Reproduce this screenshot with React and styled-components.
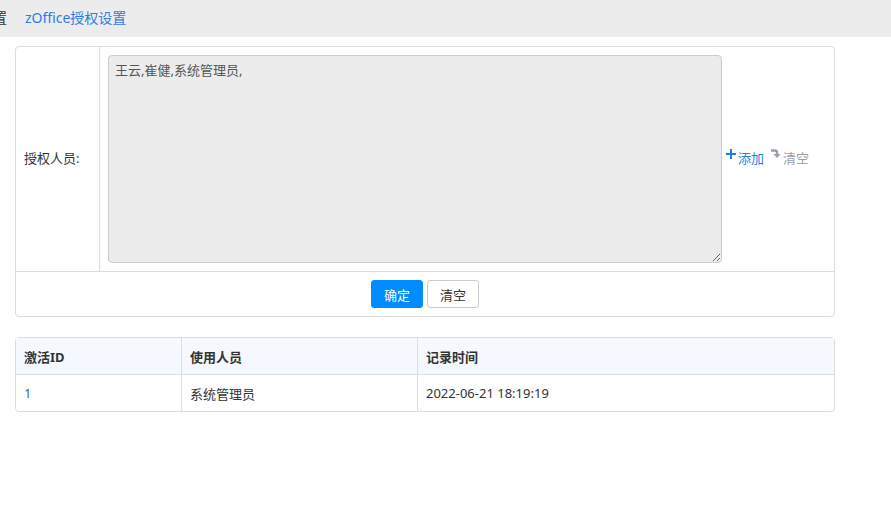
import React from "react";
import styled, { createGlobalStyle } from "styled-components";

const FONT = `"Noto Sans", "Noto Sans CJK SC", sans-serif`;

const Global = createGlobalStyle`
  html, body { margin: 0; padding: 0; background: #fff; }
  body {
    font-family: ${FONT};
    font-size: 13px;
    color: #333;
  }
`;

const TopBar = styled.div`
  height: 37px;
  box-sizing: border-box;
  padding-bottom: 3px;
  background: #ececec;
  display: flex;
  align-items: center;
  overflow: hidden;
  font-size: 14px;
  white-space: nowrap;
`;

const Crumb = styled.span`
  color: ${(p) => (p.$active ? "#2f7bea" : "#333")};
  margin-left: ${(p) => p.$ml || 0}px;
`;

const Page = styled.div`
  padding: 9px 56px 0 15px;
  width: 820px;
`;

const Panel = styled.div`
  border: 1px solid #ddd;
  border-radius: 4px;
  background: #fff;
`;

const FormRow = styled.div`
  display: flex;
  border-bottom: 1px solid #ddd;
`;

const LabelCell = styled.div`
  width: 75px;
  padding-left: 8px;
  padding-bottom: 4px;
  border-right: 1px solid #ddd;
  display: flex;
  align-items: center;
  color: #333;
`;

const FieldCell = styled.div`
  flex: 1;
  padding: 8px;
  display: flex;
  align-items: center;
`;

const Area = styled.textarea`
  width: 614px;
  height: 208px;
  box-sizing: border-box;
  background: #ececec;
  border: 1px solid #ccc;
  border-radius: 4px;
  padding: 4px 6px;
  font-family: ${FONT};
  font-size: 13px;
  color: #555;
  resize: both;
  margin: 0;
`;

const Links = styled.div`
  display: flex;
  align-items: center;
  margin-left: 4px;
  margin-bottom: 4px;
  gap: 7px;
  font-size: 13px;
`;

const ActLink = styled.span`
  display: inline-flex;
  align-items: center;
  color: ${(p) => p.$c};
  gap: 2px;
`;

const BtnRow = styled.div`
  display: flex;
  justify-content: center;
  gap: 4px;
  padding: 8px 0;
`;

const Btn = styled.button`
  width: 52px;
  height: 28px;
  border-radius: 3px;
  font-family: ${FONT};
  font-size: 13px;
  border: 1px solid ${(p) => (p.$primary ? "#008cff" : "#ccc")};
  background: ${(p) => (p.$primary ? "#008cff" : "#fff")};
  color: ${(p) => (p.$primary ? "#fff" : "#333")};
  padding: 0;
`;

const Table = styled.table`
  margin-top: 20px;
  width: 820px;
  border-collapse: separate;
  border-spacing: 0;
  border: 1px solid #ddd;
  border-radius: 4px;
  font-size: 13px;
`;

const Th = styled.th`
  text-align: left;
  font-weight: bold;
  background: #f5f9ff;
  height: 37px;
  padding: 0 8px;
  color: #333;
  border-bottom: 1px solid #ddd;
  border-left: ${(p) => (p.$first ? "none" : "1px solid #ddd")};
  width: ${(p) => p.$w}px;
  box-sizing: border-box;
`;

const Td = styled.td`
  height: 36px;
  padding: 0 8px;
  color: ${(p) => (p.$link ? "#2a6bb8" : "#333")};
  border-left: ${(p) => (p.$first ? "none" : "1px solid #ddd")};
`;

const Plus = () => (
  <svg width="10" height="10" viewBox="0 0 10 10" style={{ marginTop: -6 }}>
    <rect x="4" y="0" width="2" height="10" fill="#1b7fe0" />
    <rect x="0" y="4" width="10" height="2" fill="#1b7fe0" />
  </svg>
);

const Turn = () => (
  <svg width="10" height="10" viewBox="0 0 10 10" style={{ marginTop: -6 }}>
    <path d="M0 1.5 H4 Q6 1.5 6 3.5 V5" stroke="#98a0aa" strokeWidth="2.4" fill="none" />
    <path d="M2.5 5 H9.5 L6 9 Z" fill="#98a0aa" />
  </svg>
);

export default function App() {
  return (
    <>
      <Global />
      <TopBar>
        <Crumb $ml={-7}>置</Crumb>
        <Crumb $active $ml={18}>zOffice授权设置</Crumb>
      </TopBar>
      <Page>
        <Panel>
          <FormRow>
            <LabelCell>授权人员:</LabelCell>
            <FieldCell>
              <Area readOnly defaultValue="王云,崔健,系统管理员," />
              <Links>
                <ActLink $c="#2b7fe0"><Plus />添加</ActLink>
                <ActLink $c="#98a0aa"><Turn />清空</ActLink>
              </Links>
            </FieldCell>
          </FormRow>
          <BtnRow>
            <Btn $primary>确定</Btn>
            <Btn>清空</Btn>
          </BtnRow>
        </Panel>
        <Table>
          <thead>
            <tr>
              <Th $first $w={165}>激活ID</Th>
              <Th $w={236}>使用人员</Th>
              <Th>记录时间</Th>
            </tr>
          </thead>
          <tbody>
            <tr>
              <Td $first $link>1</Td>
              <Td>系统管理员</Td>
              <Td>2022-06-21 18:19:19</Td>
            </tr>
          </tbody>
        </Table>
      </Page>
    </>
  );
}
